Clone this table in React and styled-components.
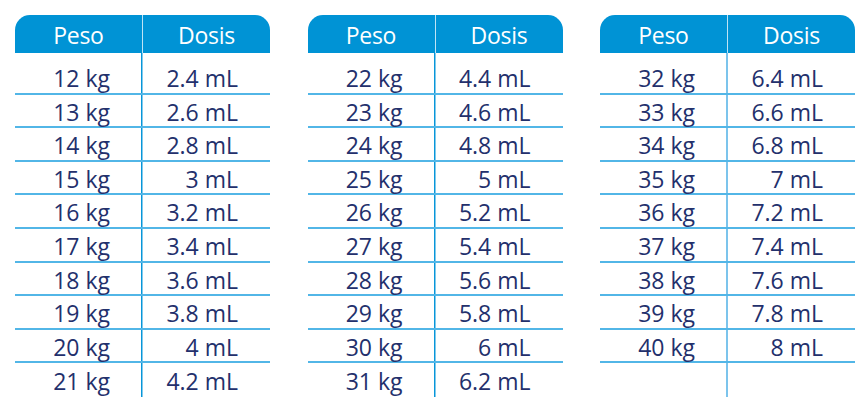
import styled, { createGlobalStyle } from 'styled-components';

const GlobalStyle = createGlobalStyle`
  html, body {
    margin: 0;
    padding: 0;
    background: #ffffff;
  }
  body {
    font-family: "Open Sans", "Noto Sans", sans-serif;
  }
`;

const Page = styled.div`
  display: grid;
  grid-template-columns: repeat(3, 255px);
  column-gap: 37.5px;
  padding: 15px 0 0 15px;
`;

const Table = styled.div`
  display: flex;
  flex-direction: column;
  width: 255px;
`;

const Head = styled.div`
  display: grid;
  grid-template-columns: 127px 128px;
  height: 38px;
  background: #0093d5;
  border-radius: 15px 15px 0 0;
`;

const HeadCell = styled.div`
  display: flex;
  align-items: center;
  justify-content: center;
  padding-top: 1px;
  color: #ffffff;
  font-size: 23px;
  letter-spacing: -0.3px;
  border-left: ${p => (p.$divided ? '1.5px solid #bfe3f5' : 'none')};
`;

const Body = styled.div`
  padding-top: 8px;
  background: linear-gradient(${p => p.$divider}, ${p => p.$divider}) no-repeat 126px 0 / ${p => p.$dividerWidth} 100%;
`;

const Row = styled.div`
  display: grid;
  grid-template-columns: 127px 128px;
  height: 33.6px;
  box-sizing: border-box;
  border-bottom: ${p => (p.$last ? 'none' : '2px solid #52b6e7')};
`;

const Cell = styled.div`
  display: flex;
  align-items: center;
  justify-content: flex-end;
  padding: 1px 32px 0 0;
  color: #23306c;
  font-size: 23px;
  white-space: pre;
`;

const formatDose = kg => {
  const ml = Math.round(kg * 2) / 10;
  return `${Number.isInteger(ml) ? ml : ml.toFixed(1)} mL`;
};

const range = (from, to) => Array.from({ length: to - from + 1 }, (_, i) => from + i);

const tables = [
  { weights: range(12, 21), divider: '#0796d9', width: '1.5px' },
  { weights: range(22, 31), divider: '#0796d9', width: '1.5px' },
  { weights: [...range(32, 40), null], divider: '#7cc4ec', width: '2px' },
];

const DoseTable = ({ weights, divider, width }) => (
  <Table>
    <Head>
      <HeadCell>Peso</HeadCell>
      <HeadCell $divided>Dosis</HeadCell>
    </Head>
    <Body $divider={divider} $dividerWidth={width}>
      {weights.map((kg, i) => (
        <Row key={i} $last={i === weights.length - 1}>
          <Cell>{kg ? `${kg} kg` : ''}</Cell>
          <Cell>{kg ? formatDose(kg) : ''}</Cell>
        </Row>
      ))}
    </Body>
  </Table>
);

export default function App() {
  return (
    <>
      <GlobalStyle />
      <Page>
        {tables.map((t, i) => (
          <DoseTable key={i} weights={t.weights} divider={t.divider} width={t.width} />
        ))}
      </Page>
    </>
  );
}
